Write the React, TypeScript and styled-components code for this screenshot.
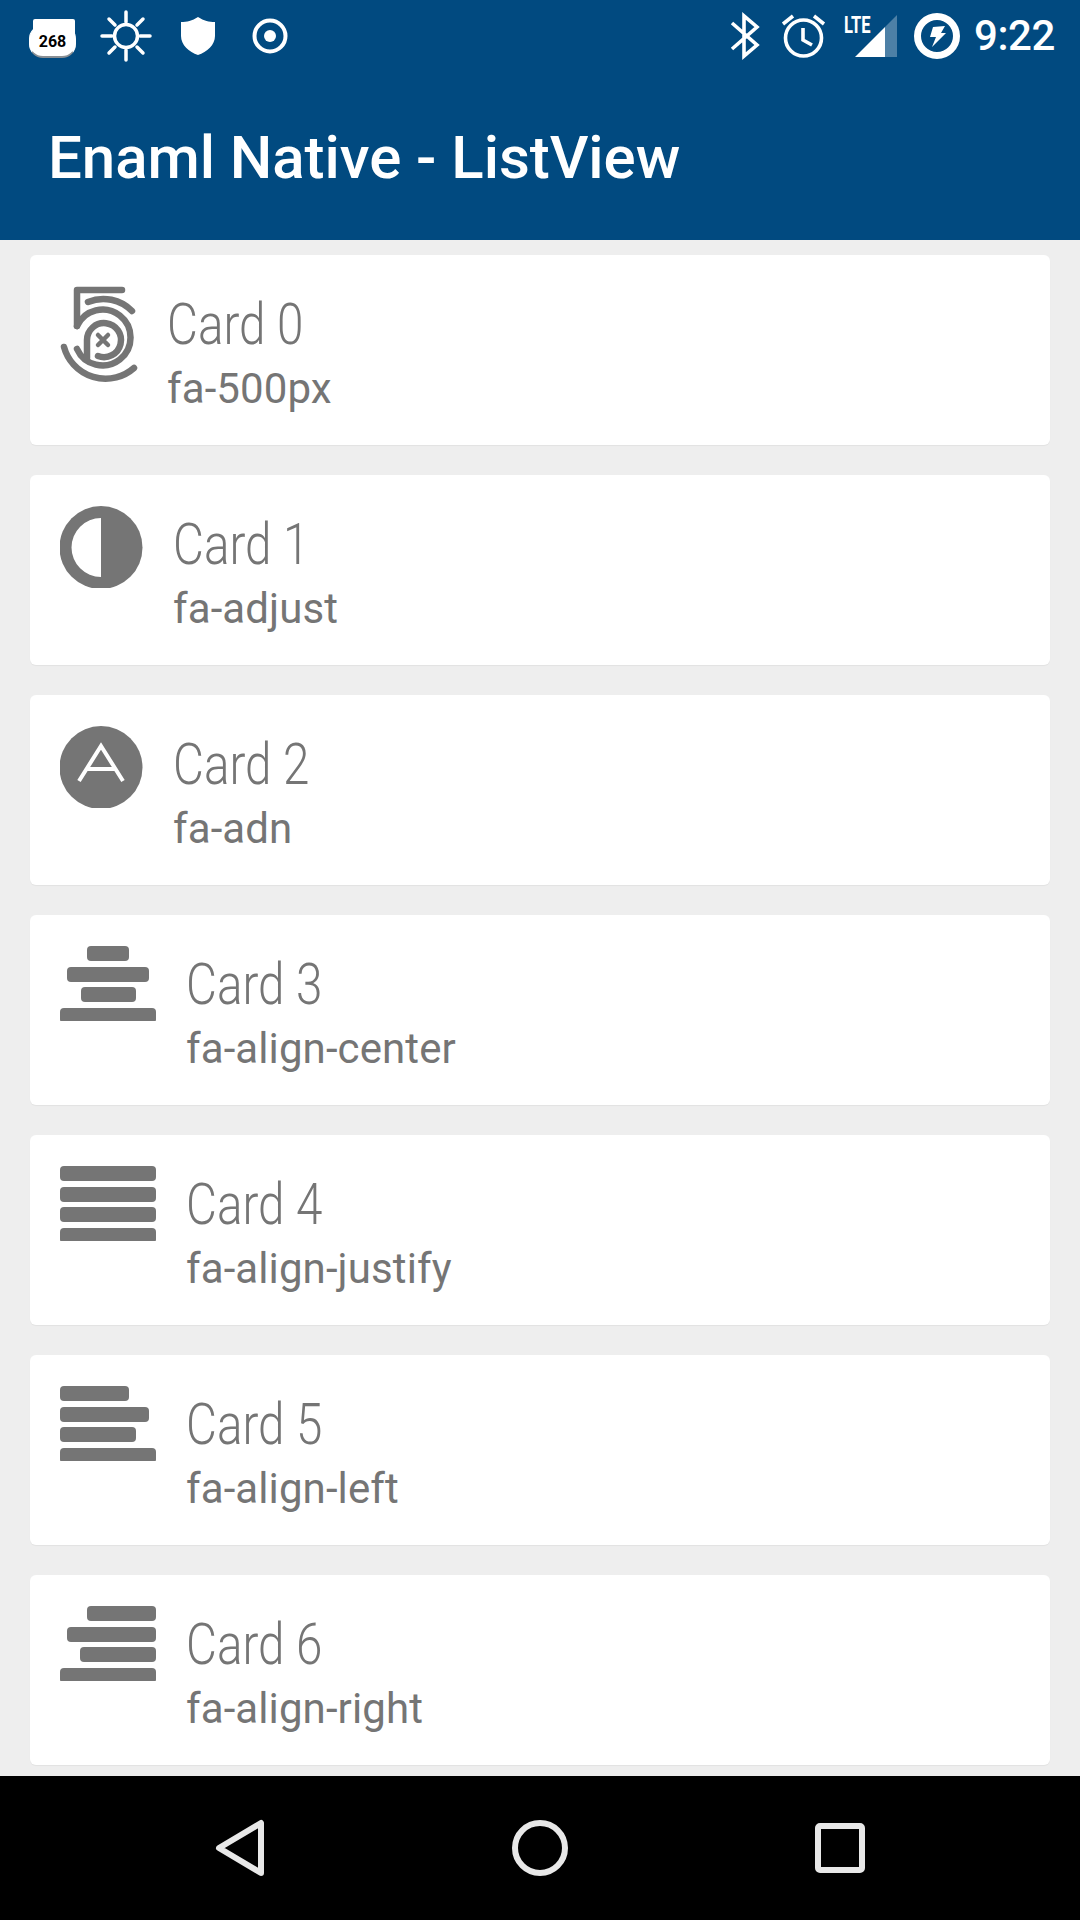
import React from "react";
import styled, { createGlobalStyle } from "styled-components";

const Global = createGlobalStyle`
  html, body { margin: 0; padding: 0; background: #eeeeee; }
  body { width: 1080px; height: 1920px; overflow: hidden; font-family: Roboto, "Liberation Sans", sans-serif; }
`;

const Screen = styled.div`
  display: flex;
  flex-direction: column;
  width: 1080px;
  height: 1920px;
  background: #eeeeee;
`;
const Header = styled.header`
  flex: 0 0 240px;
  display: flex;
  flex-direction: column;
  background: #014a80;
  color: #fff;
`;
const StatusBar = styled.div`
  flex: 0 0 72px;
  display: flex;
  align-items: flex-start;
  justify-content: space-between;
`;
const StatusGroup = styled.div<{ $pad: string }>`
  display: flex;
  align-items: flex-start;
  padding: ${(p) => p.$pad};
`;
const StatusIcon = styled.svg<{ $w: number; $ml?: number }>`
  display: block;
  flex: none;
  width: ${(p) => p.$w}px;
  height: 72px;
  margin-left: ${(p) => p.$ml ?? 0}px;
  overflow: visible;
`;
const Badge = styled.div`
  position: relative;
  flex: none;
  width: 47px;
  height: 72px;
  &::before {
    content: "";
    position: absolute;
    left: 4px;
    top: 19px;
    width: 42px;
    height: 30px;
    background: #fff;
    border-radius: 2px;
  }
`;
const BadgePill = styled.span`
  position: absolute;
  left: 0;
  top: 25px;
  box-sizing: border-box;
  width: 47px;
  height: 33px;
  border-radius: 14px;
  border: 1px solid #fff;
  border-bottom: 2px solid #8a8f94;
  background: #fff;
  color: #000;
  font: 700 16px/31px Roboto, sans-serif;
  text-align: center;
`;
const Clock = styled.span`
  margin-left: 13px;
  margin-top: 13px;
  font: 500 42px/46px Roboto, sans-serif;
  letter-spacing: -0.4px;
  color: #fff;
`;
const Title = styled.h1`
  margin: 0;
  padding: 51px 0 0 48px;
  font: 500 60px/70px Roboto, sans-serif;
  letter-spacing: -0.05px;
  color: #fff;
`;
const List = styled.main`
  flex: 1;
  min-height: 0;
  display: flex;
  flex-direction: column;
  gap: 30px;
  padding: 15px 30px 0;
  overflow: hidden;
`;
const Card = styled.article`
  flex: 0 0 190px;
  display: flex;
  align-items: flex-start;
  box-sizing: border-box;
  padding: 30px 30px 0;
  background: #fff;
  border-radius: 6px;
  box-shadow: 0 1px 1px rgba(0, 0, 0, 0.05);
  color: #757575;
`;
const IconSlot = styled.div<{ $w: number }>`
  flex: 0 0 ${(p) => p.$w}px;
`;
const IconSvg = styled.svg`
  display: block;
  fill: #757575;
`;
const OutlineIconSvg = styled(IconSvg)`
  fill: none;
  stroke: #757575;
  stroke-width: 6.5;
  stroke-linecap: round;
`;
const Texts = styled.div`
  display: flex;
  flex-direction: column;
  align-items: flex-start;
  margin-top: 3px;
`;
const CardTitle = styled.div`
  font: 300 58px/72px Roboto, sans-serif;
  transform: scaleX(0.82);
  transform-origin: left center;
  white-space: nowrap;
`;
const CardSub = styled.div`
  margin-top: 1px;
  font: 400 42px/56px Roboto, sans-serif;
  letter-spacing: 0.1px;
  white-space: nowrap;
`;
const NavBar = styled.nav`
  flex: 0 0 144px;
  display: grid;
  grid-template-columns: repeat(3, 1fr);
  box-sizing: border-box;
  padding: 0 90px;
  align-items: center;
  justify-items: center;
  background: #000;
`;
const NavIcon = styled.svg`
  display: block;
  width: 72px;
  height: 72px;
  fill: none;
  stroke: #e8e8e8;
  stroke-width: 6;
  stroke-linejoin: round;
`;

const Icon500 = () => (
  <OutlineIconSvg width={84} height={100} viewBox="0 0 84 100">
    <path d="M17 5H62M17 5V41" />
    <path d="M28 17A40 40 0 0 1 72 26" />
    <path d="M17 41A28 28 0 1 1 17 64" />
    <path d="M27 73V55A17 17 0 1 1 38 71" />
    <path d="M4 62A43 43 0 0 0 74 83" />
    <path d="M38 50L48 60M48 50L38 60" strokeWidth={4.5} />
  </OutlineIconSvg>
);
const IconAdjust = () => (
  <IconSvg width={84} height={83} viewBox="0 0 84 83">
    <circle cx={41} cy={42.5} r={41.5} />
    <path d="M41 13A29.5 29.5 0 0 0 41 72Z" fill="#fff" />
  </IconSvg>
);
const IconAdn = () => (
  <IconSvg width={84} height={83} viewBox="0 0 84 83">
    <circle cx={41} cy={42.5} r={41.5} />
    <path d="M19 56L41 21L63 56M27 44H55" fill="none" stroke="#fff" strokeWidth={4} />
  </IconSvg>
);
const ALIGN: Record<string, [number, number][]> = {
  center: [[27, 69], [7, 89], [21, 76], [0, 96]],
  justify: [[0, 96], [0, 96], [0, 96], [0, 96]],
  left: [[0, 69], [0, 89], [0, 76], [0, 96]],
  right: [[27, 96], [7, 96], [20, 96], [0, 96]],
};
const BAR_TOPS = [1, 22, 42, 63];
const IconAlign = ({ kind }: { kind: string }) => (
  <IconSvg width={96} height={76} viewBox="0 0 96 76">
    {ALIGN[kind].map(([a, b], i) => (
      <rect key={i} x={a} y={BAR_TOPS[i]} width={b - a} height={15} rx={4} />
    ))}
  </IconSvg>
);

const CARDS = [
  { n: 0, name: "fa-500px", w: 107, icon: <Icon500 /> },
  { n: 1, name: "fa-adjust", w: 113, icon: <IconAdjust /> },
  { n: 2, name: "fa-adn", w: 113, icon: <IconAdn /> },
  { n: 3, name: "fa-align-center", w: 126, icon: <IconAlign kind="center" /> },
  { n: 4, name: "fa-align-justify", w: 126, icon: <IconAlign kind="justify" /> },
  { n: 5, name: "fa-align-left", w: 126, icon: <IconAlign kind="left" /> },
  { n: 6, name: "fa-align-right", w: 126, icon: <IconAlign kind="right" /> },
];

export default function App() {
  return (
    <Screen>
      <Global />
      <Header>
        <StatusBar>
          <StatusGroup $pad="0 0 0 29px">
            <Badge>
              <BadgePill>268</BadgePill>
            </Badge>
            <StatusIcon $w={50} $ml={25} viewBox="101 0 50 72" stroke="#fff" strokeWidth={3.5} fill="none">
              <circle cx={126} cy={36} r={11.5} />
              <path d="M126 12V22M126 50V60M102 36H112M140 36H150M109 19L115 25M137 47L143 53M143 19L137 25M115 47L109 53" strokeLinecap="round" />
            </StatusIcon>
            <StatusIcon $w={34} $ml={30} viewBox="181 0 34 72" fill="#fff">
              <path d="M198 17C192 21 187 22 181 22V36C181 45 189 52 198 55C207 52 215 45 215 36V22C209 22 204 21 198 17Z" />
            </StatusIcon>
            <StatusIcon $w={36} $ml={37} viewBox="252 0 36 72" fill="none" stroke="#fff" strokeWidth={4}>
              <circle cx={270} cy={36} r={15.5} />
              <circle cx={270} cy={36} r={6} fill="#fff" stroke="none" />
            </StatusIcon>
          </StatusGroup>
          <StatusGroup $pad="0 25px 0 0">
            <StatusIcon $w={28} viewBox="730 0 28 72" fill="none" stroke="#fff" strokeWidth={3.6}>
              <path d="M732 23L757 45L744 56V16L757 27L732 49" />
            </StatusIcon>
            <StatusIcon $w={44} $ml={24} viewBox="782 0 44 72" fill="none" stroke="#fff" strokeWidth={3.6}>
              <circle cx={803.5} cy={38} r={18} />
              <path d="M783 24L793 16M814 16L824 24M803 28V40L812 45" />
            </StatusIcon>
            <StatusIcon $w={55} $ml={17} viewBox="843 0 55 72" fill="#fff">
              <text transform="translate(844 33) scale(0.72 1)" fontFamily="Roboto, sans-serif" fontWeight={700} fontSize={23}>LTE</text>
              <path d="M855 57L885 27V57Z" />
              <path d="M885 27L897 15V57H885Z" fillOpacity={0.3} />
            </StatusIcon>
            <StatusIcon $w={48} $ml={15} viewBox="913 0 48 72" fill="none">
              <circle cx={937} cy={36} r={19.5} stroke="#fff" strokeWidth={7} />
              <path d="M933 27L945 26L941 33H946L932 47L936 37H930Z" fill="#fff" />
            </StatusIcon>
            <Clock>9:22</Clock>
          </StatusGroup>
        </StatusBar>
        <Title>Enaml Native - ListView</Title>
      </Header>
      <List>
        {CARDS.map((c) => (
          <Card key={c.n}>
            <IconSlot $w={c.w}>{c.icon}</IconSlot>
            <Texts>
              <CardTitle>Card {c.n}</CardTitle>
              <CardSub>{c.name}</CardSub>
            </Texts>
          </Card>
        ))}
      </List>
      <NavBar>
        <NavIcon viewBox="0 0 72 72">
          <path d="M57 11V61L15 36Z" />
        </NavIcon>
        <NavIcon viewBox="0 0 72 72">
          <circle cx={36} cy={36} r={25} />
        </NavIcon>
        <NavIcon viewBox="0 0 72 72">
          <rect x={14} y={14} width={44} height={44} rx={2} />
        </NavIcon>
      </NavBar>
    </Screen>
  );
}
